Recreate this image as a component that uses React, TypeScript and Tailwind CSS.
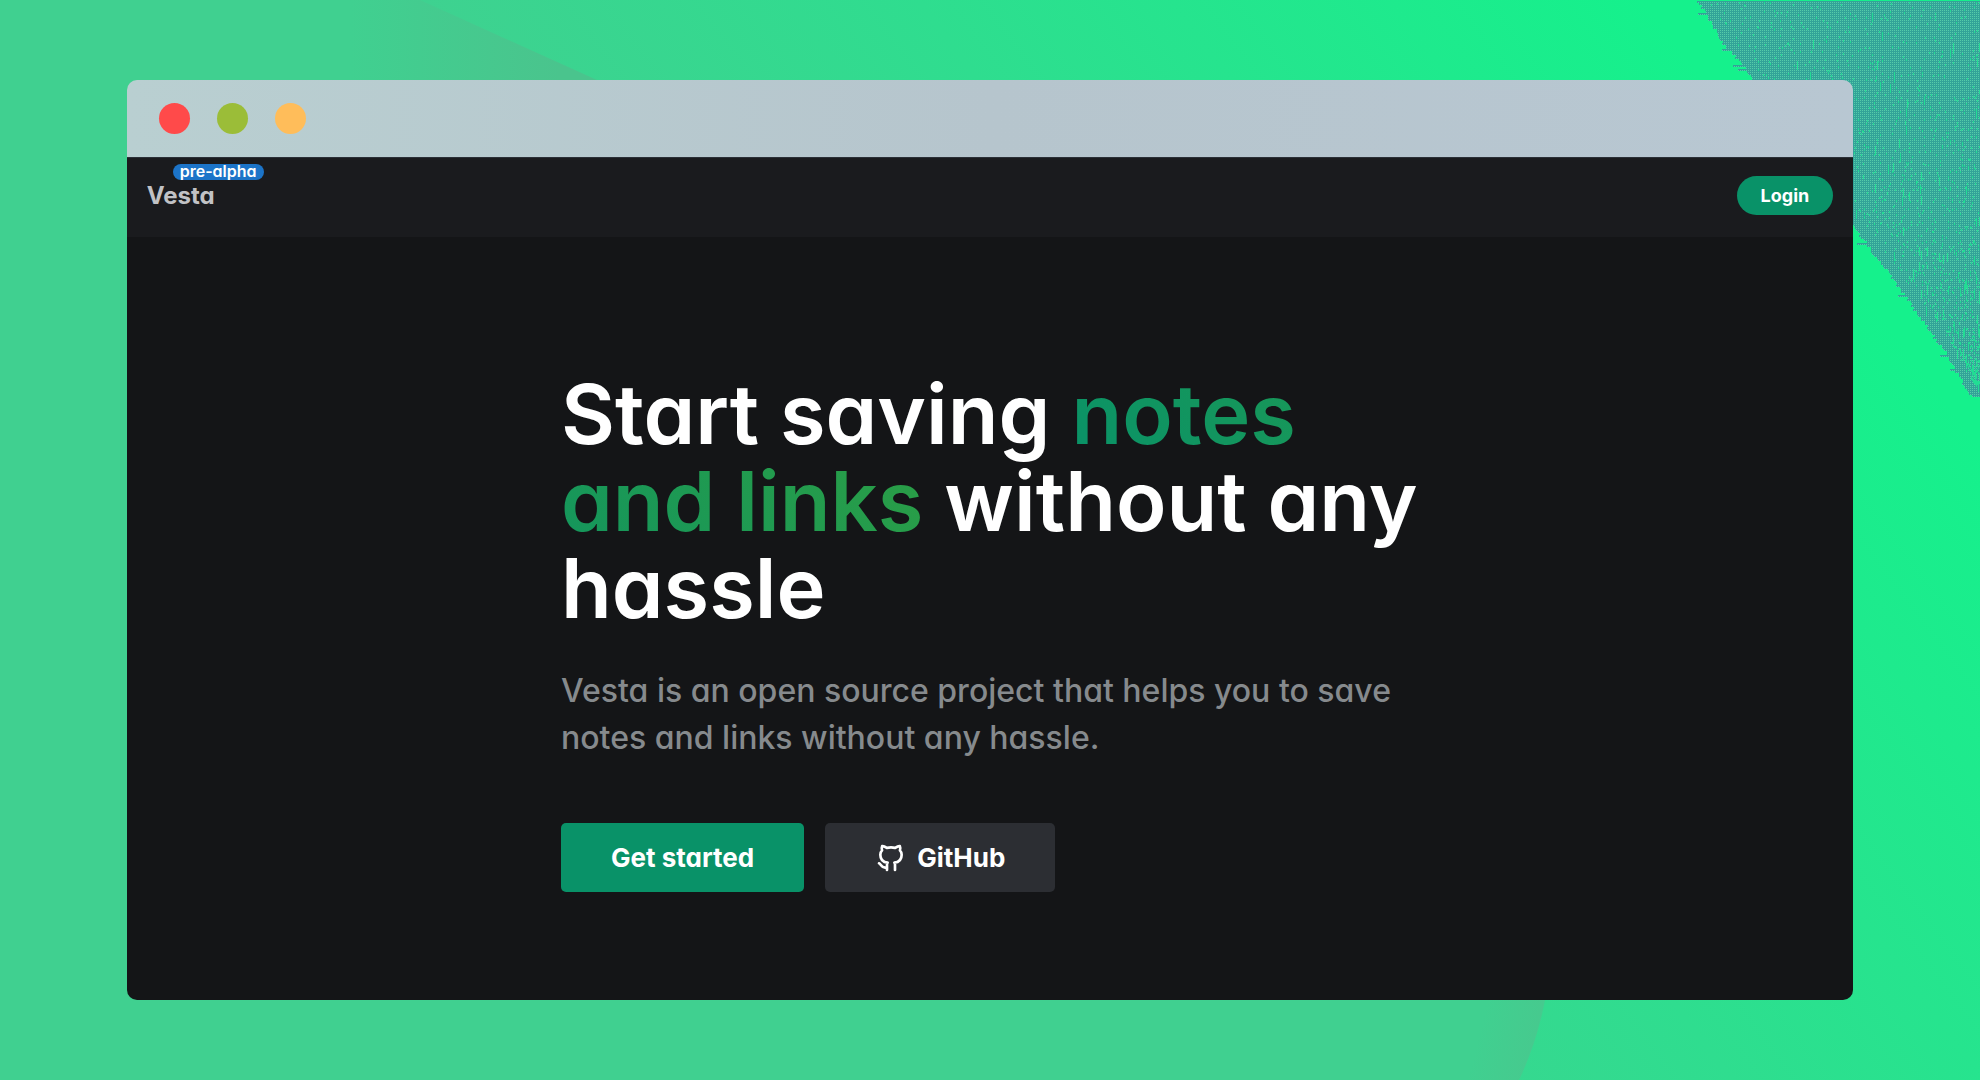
import { TbBrandGithub } from "react-icons/tb";

// Small seeded generator so the grain stays the same on every render
function createRandom(seed: number) {
    let value = seed;
    return () => {
        value = (value * 16807) % 2147483647;
        return value / 2147483647;
    };
}

// Left edge of the teal corner
const EDGE = [
    [1697, 1],
    [1710, 22],
    [1722, 42],
    [1740, 62],
    [1752, 80],
    [1855, 229],
    [1880, 262],
    [1915, 310],
    [1945, 352],
    [1970, 396],
];

function edgeAt(y: number) {
    for (let i = 1; i < EDGE.length; i++) {
        const [x0, y0] = EDGE[i - 1];
        const [x1, y1] = EDGE[i];
        if (y <= y1) return x0 + ((x1 - x0) * (y - y0)) / (y1 - y0);
    }
    return 1980;
}

function createCorner() {
    const random = createRandom(77);
    let edge = "M1980 1";
    for (let y = 1; y < 398; y += 2) {
        const spike = random() > 0.96 ? -8 : 0;
        const x = Math.round(edgeAt(y) + random() * 4 - 1 + spike);
        edge += `L${x} ${y}L${x} ${y + 2}`;
    }
    edge += "L1980 399Z";

    let streaks = "";
    for (let i = 0; i < 1300; i++) {
        const y = Math.floor(random() * 390);
        const start = edgeAt(y + 12) + 6;
        const x = Math.floor(start + random() * (1980 - start));
        const height = random() > 0.93 ? 9 : 2;
        if (start < 1976) streaks += `M${x} ${y + 2}h1v${height}h-1z`;
    }
    return { edge, streaks };
}

const corner = createCorner();

function Background() {
    return (
        <svg className="absolute inset-0 w-full h-full" viewBox="0 0 1980 1080" preserveAspectRatio="none" aria-hidden="true">
            <defs>
                <linearGradient id="blobTop" gradientUnits="userSpaceOnUse" x1="350" y1="60" x2="560" y2="60">
                    <stop offset="0" stopColor="#40d090" />
                    <stop offset="1" stopColor="#4ac48d" />
                </linearGradient>
                <linearGradient id="blobBottom" gradientUnits="userSpaceOnUse" x1="1480" y1="1030" x2="1540" y2="1045">
                    <stop offset="0" stopColor="#40d090" />
                    <stop offset="1" stopColor="#47c98e" />
                </linearGradient>
                <pattern id="grain" width="2" height="2" patternUnits="userSpaceOnUse">
                    <rect width="2" height="2" fill="#32a398" />
                    <rect width="1" height="1" fill="#55cba9" />
                </pattern>
            </defs>
            <path d="M0 0H420L597 80V540H0Z" fill="url(#blobTop)" />
            <path d="M0 540H1400Q1580 800 1545 1000Q1537 1042 1519 1080H0Z" fill="url(#blobBottom)" />
            <path d={corner.edge} fill="url(#grain)" shapeRendering="crispEdges" />
            <path d={corner.streaks} fill="#22dc94" shapeRendering="crispEdges" />
        </svg>
    );
}

function TitleBar() {
    return (
        <div className="h-[77px] px-8 flex items-center gap-[27px] bg-linear-to-r from-[#b9cfd1] via-[#b6c5cd] to-[#b8c7d2]">
            <div className="size-[31px] rounded-full bg-[#ff4a4a]"></div>
            <div className="size-[31px] rounded-full bg-[#9bbd38]"></div>
            <div className="size-[31px] rounded-full bg-[#ffbd5a]"></div>
        </div>
    );
}

function Header() {
    return (
        <header className="h-20 px-5 pb-1 flex justify-between items-center bg-[#1a1b1e] border-t border-[#2b3037]">
            <div className="relative">
                <span className="text-[24px] leading-8 font-bold text-[#c1c2c5]">Vesta</span>
                <span className="absolute left-[26px] -top-4 h-4 px-[7px] rounded-full bg-[#1c74c8] text-white text-[16px] leading-[14px] font-semibold whitespace-nowrap">pre-alpha</span>
            </div>
            <button className="h-[39px] px-6 rounded-full bg-[#099268] text-white text-[18px] font-bold cursor-pointer">Login</button>
        </header>
    );
}

function Hero() {
    return (
        <main className="flex-1 bg-[#141517] px-5 pt-[134px]">
            <div className="max-w-[858px] mx-auto">
                <h1 className="text-[83px] leading-[87px] font-semibold text-white">
                    Start saving{" "}
                    <span className="bg-[linear-gradient(45deg,#099268,#2b9e45)] bg-clip-text text-transparent">notes and links</span>{" "}
                    without any hassle
                </h1>
                <p className="mt-[35px] text-[32px] leading-[47px] font-medium text-[#868a8d]">
                    Vesta is an open source project that helps you to save notes and links without any hassle.
                </p>
                <div className="mt-[62px] flex gap-[21px]">
                    <button className="h-[69px] px-[50px] rounded-[5px] bg-[#099268] text-white text-[26px] font-bold cursor-pointer">Get started</button>
                    <a href="#github" className="h-[69px] px-[50px] rounded-[5px] bg-[#2c2e33] text-white text-[26px] font-bold flex items-center gap-[10px]">
                        <TbBrandGithub size={32} />
                        GitHub
                    </a>
                </div>
            </div>
        </main>
    );
}

function App() {
    return (
        <div className="relative min-h-screen flex py-20 px-[6.4%] bg-[linear-gradient(53deg,#40d090_42%,#2fdd8f_62%,#15f18c_88%)] font-['Inter',sans-serif] [font-feature-settings:'cv11']">
            <Background />

            {/* Browser window */}

            <div className="relative flex-1 flex flex-col rounded-[10px] overflow-hidden">
                <TitleBar />
                <Header />
                <Hero />
            </div>
        </div>
    );
}

export default App;
